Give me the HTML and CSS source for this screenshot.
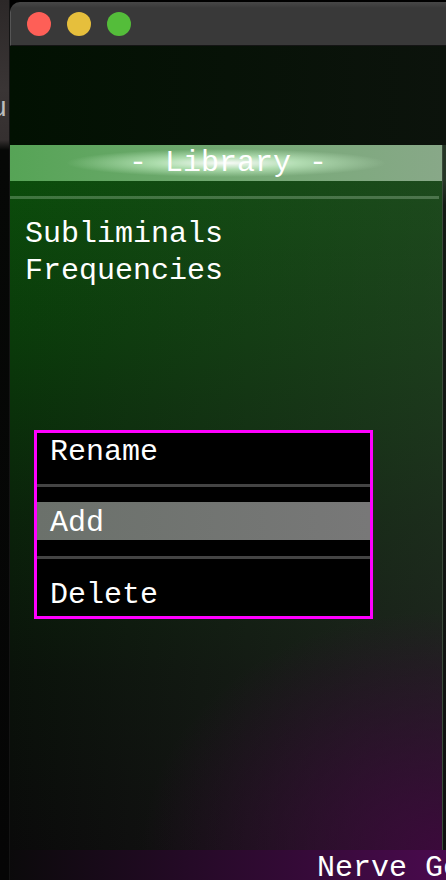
FILE: index.html
```html
<!DOCTYPE html>
<html lang="en">
<head>
  <meta charset="UTF-8">
  <meta name="viewport" content="width=device-width, initial-scale=1.0">
  <title>Library</title>
  <link rel="stylesheet" href="styles.css">
</head>
<body>
  <div class="desktop">
    <!-- Trozo del escritorio a la izquierda -->
    <div class="desk-strip">
      <span class="desk-glyph">u</span>
    </div>

    <div class="window">
      <div class="titlebar">
        <span class="light red"></span>
        <span class="light yellow"></span>
        <span class="light green"></span>
      </div>

      <div class="top-dark"></div>

      <div class="main">
        <div class="panel">
          <div class="library-bar">- Library -</div>
          <div class="band"></div>
          <div class="rule"></div>

          <ul class="lib-list">
            <li>Subliminals</li>
            <li>Frequencies</li>
          </ul>

          <!-- Menu contextual -->
          <div class="context-menu">
            <div class="menu-item item-rename">Rename</div>
            <div class="menu-sep sep-top"></div>
            <div class="menu-item item-add active">Add</div>
            <div class="menu-sep sep-bottom"></div>
            <div class="menu-item item-delete">Delete</div>
          </div>
        </div>
        <div class="edge"></div>
      </div>

      <div class="footer">Nerve Gear</div>
    </div>
  </div>
</body>
</html>
```

FILE: styles.css
```css
/* Estilos generales */
body {
  margin: 0;
  padding: 0;
  background-color: #000;
  font-family: 'Liberation Mono', 'DejaVu Sans Mono', monospace;
  color: #fff;
  overflow: hidden;
}

.desktop {
  display: flex;
  width: 446px;
  height: 880px;
  overflow: hidden;
}

/* Escritorio */
.desk-strip {
  width: 10px;
  flex-shrink: 0;
  background: linear-gradient(to bottom, #2c2828 0px, #3a3535 90px, #353030 140px, #060806 150px, #050505 100%);
  overflow: hidden;
  border-right: 1px solid #141414;
  box-sizing: border-box;
}

.desk-glyph {
  display: block;
  margin-top: 92px;
  margin-left: -9px;
  font-family: 'Liberation Sans', sans-serif;
  font-size: 28px;
  color: #bdbdbd;
  line-height: 30px;
}

/* Ventana */
.window {
  flex: 1;
  display: flex;
  flex-direction: column;
  margin-top: 2px;
  border-top-left-radius: 10px;
  overflow: hidden;
  min-width: 0;
}

.titlebar {
  height: 44px;
  box-sizing: border-box;
  display: flex;
  gap: 16px;
  padding: 10px 0 0 16px;
  background: linear-gradient(to bottom, #474747, #393939 6px, #393939);
  border-bottom: 1px solid #151515;
  border-left: 1px solid #555;
}

.light {
  width: 24px;
  height: 24px;
  border-radius: 50%;
}

.red { background-color: #fe5f57; }
.yellow { background-color: #e6bf3c; }
.green { background-color: #54bd3a; }

.top-dark {
  height: 99px;
  background: linear-gradient(to right, #021102, #0c130c);
}

/* Zona principal */
.main {
  flex: 1;
  display: flex;
}

.panel {
  flex: 1;
  position: relative;
  background:
    radial-gradient(ellipse 300px 240px at 100% 100%, rgba(62, 8, 62, 0.9), rgba(50, 8, 50, 0) 100%),
    linear-gradient(to right, rgba(0, 0, 0, 0), rgba(70, 70, 70, 0.3)),
    linear-gradient(to bottom, #0b500b 0%, #0a3a0a 28%, #0a230a 52%, #0a120a 75%, #0a0a0a 100%);
}

.edge {
  width: 4px;
  background: linear-gradient(to bottom, #263626 0, #263626 36px, #141a14 60px, #101010 100%);
  border-left: 1px solid #3a4a3a;
  box-sizing: border-box;
}

.library-bar {
  height: 36px;
  line-height: 36px;
  font-size: 30px;
  text-align: center;
  white-space: pre;
  background:
    radial-gradient(ellipse 160px 14px at 50% 50%, rgba(255, 255, 255, 0.95) 0%, rgba(215, 255, 215, 0.6) 45%, rgba(200, 255, 200, 0) 100%),
    linear-gradient(to right, #56a456, #78aa78 60%, #88a888);
  padding-left: 4px;
}

.band {
  height: 15px;
}

.rule {
  height: 3px;
  margin-right: 3px;
  background-color: rgba(200, 230, 200, 0.28);
}

.lib-list {
  list-style: none;
  margin: 0;
  padding: 17px 0 0 15px;
  font-size: 30px;
  line-height: 37px;
}

/* Menu contextual */
.context-menu {
  position: absolute;
  top: 285px;
  left: 24px;
  width: 339px;
  box-sizing: border-box;
  border: 3px solid #ff00ff;
  background-color: #000;
  font-size: 30px;
  line-height: 30px;
}

.menu-item {
  padding-left: 13px;
}

.item-rename {
  height: 51px;
  box-sizing: border-box;
  padding-top: 4px;
}

.item-add {
  height: 38px;
  box-sizing: border-box;
  padding-top: 6px;
}

.item-delete {
  height: 57px;
  box-sizing: border-box;
  padding-top: 21px;
}

.active {
  background: linear-gradient(to right, #6b716b, #787878);
}

.menu-sep {
  height: 3px;
  background-color: #444;
}

.sep-top {
  margin-bottom: 15px;
}

.sep-bottom {
  margin-top: 16px;
}

/* Pie */
.footer {
  height: 30px;
  line-height: 36px;
  font-size: 30px;
  white-space: nowrap;
  overflow: hidden;
  padding-left: 307px;
  background: linear-gradient(to right, #0b0a0b, #240a26 40%, #4a0a4e);
}
```
